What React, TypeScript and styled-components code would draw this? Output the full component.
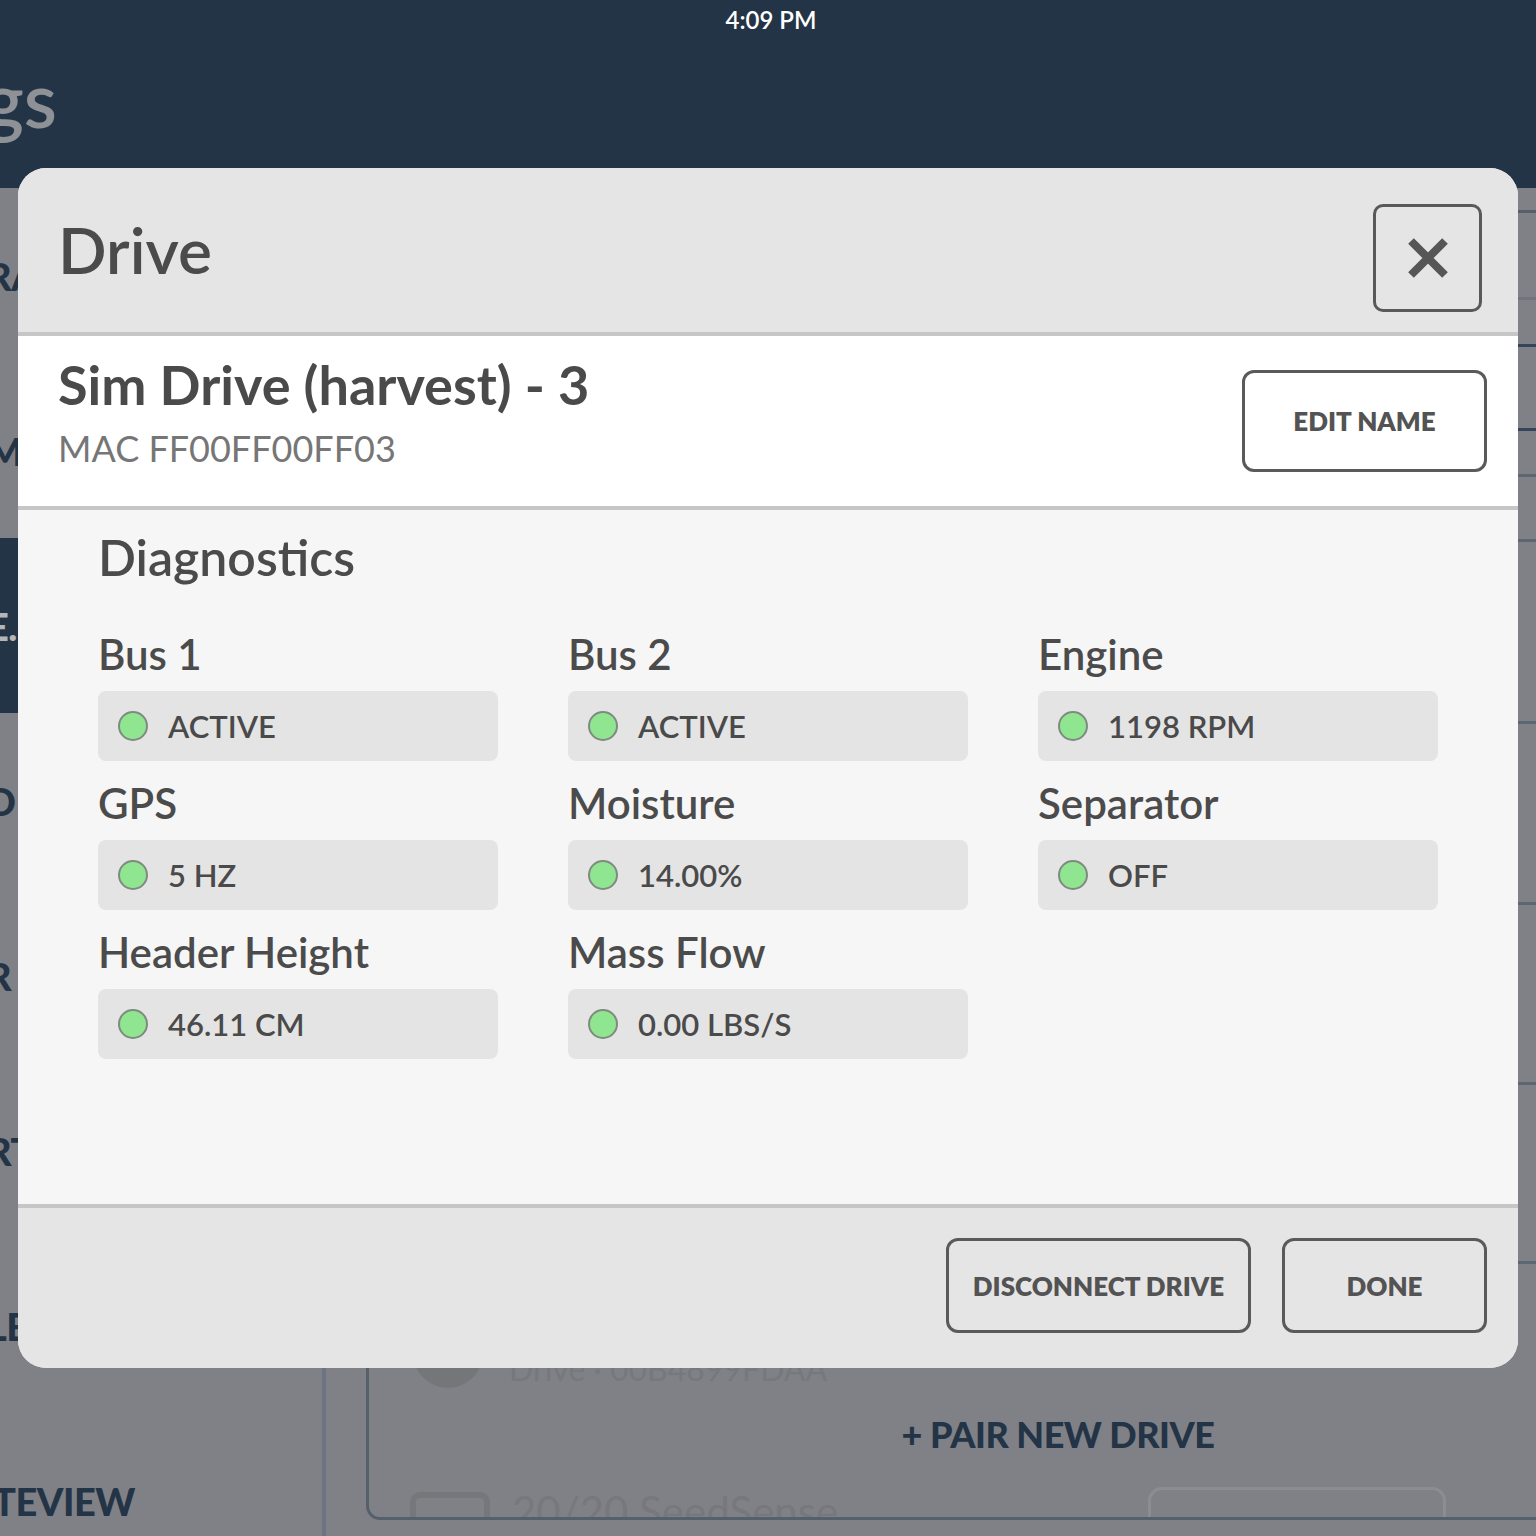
import React from 'react'
import styled, { createGlobalStyle } from 'styled-components'

const GlobalStyle = createGlobalStyle`
  html, body {
    margin: 0;
    padding: 0;
    background: #808186;
  }
  body {
    font-family: Lato, "Noto Sans", sans-serif;
  }
  * {
    box-sizing: border-box;
  }
`

type Diagnostic = { label: string; value: string }

const diagnostics: Diagnostic[] = [
  { label: 'Bus 1', value: 'ACTIVE' },
  { label: 'Bus 2', value: 'ACTIVE' },
  { label: 'Engine', value: '1198 RPM' },
  { label: 'GPS', value: '5 HZ' },
  { label: 'Moisture', value: '14.00%' },
  { label: 'Separator', value: 'OFF' },
  { label: 'Header Height', value: '46.11 CM' },
  { label: 'Mass Flow', value: '0.00 LBS/S' }
]

// only the slivers of the sidebar that peek out from behind the modal
const navItems = ['RA', 'M', 'E.', 'D', 'R', 'RT', 'LE', 'TEVIEW']
const activeNav = 2

// background list rows (height incl. bottom line, line colour)
const listRows: { h: number; line: string }[] = [
  { h: 87, line: '#6e757e' },
  { h: 47, line: '#34445a' },
  { h: 84, line: '#34445a' },
  { h: 46, line: '#5d6673' },
  { h: 65, line: '#5d6673' },
  { h: 182, line: '#5d6673' },
  { h: 181, line: '#5d6673' },
  { h: 180, line: '#5d6673' },
  { h: 179, line: '#5d6673' }
]

export default function App() {
  return (
    <>
      <GlobalStyle />
      <Screen>
        <AppHeader>
          <StatusBar>4:09 PM</StatusBar>
          <TitleClip>
            <PageTitle>Settings</PageTitle>
          </TitleClip>
        </AppHeader>

        <Body>
          <Sidebar>
            {navItems.map((item, i) => (
              <NavItem key={item} $active={i === activeNav}>
                <NavLabel $wide={item.length > 3}>{item}</NavLabel>
              </NavItem>
            ))}
          </Sidebar>

          <Main>
            <ListCard>
              {listRows.map((row, i) => (
                <ListRow key={i} $h={row.h} $line={row.line} />
              ))}
              <DriveRow>
                <DriveAvatar />
                <DriveText>
                  <span>Sim Drive (harvest) - 2</span>
                  <span>Drive · 00B4899FDAA</span>
                </DriveText>
              </DriveRow>
              <PairRow>+ PAIR NEW DRIVE</PairRow>
              <DeviceRow>
                <DeviceIcon />
                <DeviceName>20/20 SeedSense</DeviceName>
                <GhostButton />
              </DeviceRow>
            </ListCard>
          </Main>
        </Body>

        <Modal>
          <ModalHeader>
            <ModalTitle>Drive</ModalTitle>
            <CloseButton aria-label="Close">
              <svg width="40" height="40" viewBox="0 0 40 40">
                <path d="M3 3 L37 37 M37 3 L3 37" stroke="#565656" strokeWidth="8" />
              </svg>
            </CloseButton>
          </ModalHeader>

          <InfoSection>
            <InfoText>
              <DriveName>Sim Drive (harvest) - 3</DriveName>
              <MacAddress>MAC FF00FF00FF03</MacAddress>
            </InfoText>
            <OutlineButton $w={245} $h={102}>EDIT NAME</OutlineButton>
          </InfoSection>

          <DiagnosticsSection>
            <SectionTitle>Diagnostics</SectionTitle>
            <DiagGrid>
              {diagnostics.map(d => (
                <DiagCell key={d.label}>
                  <DiagLabel>{d.label}</DiagLabel>
                  <StatusBox>
                    <StatusDot />
                    <StatusValue>{d.value}</StatusValue>
                  </StatusBox>
                </DiagCell>
              ))}
            </DiagGrid>
          </DiagnosticsSection>

          <ModalFooter>
            <OutlineButton $w={305} $h={95}>DISCONNECT DRIVE</OutlineButton>
            <OutlineButton $w={205} $h={95}>DONE</OutlineButton>
          </ModalFooter>
        </Modal>
      </Screen>
    </>
  )
}

const Screen = styled.div`
  position: relative;
  width: 1536px;
  height: 1536px;
  overflow: hidden;
  display: flex;
  flex-direction: column;
  background: #808186;
`

const AppHeader = styled.header`
  height: 188px;
  flex-shrink: 0;
  background: #243447;
  display: flex;
  flex-direction: column;
`

const StatusBar = styled.div`
  height: 40px;
  line-height: 40px;
  text-align: center;
  color: #ffffff;
  font-size: 24px;
  font-weight: 600;
  padding-left: 6px;
`

const TitleClip = styled.div`
  width: 57px;
  margin-top: 13px;
  overflow: hidden;
  display: flex;
  justify-content: flex-end;
`

const PageTitle = styled.h1`
  margin: 0;
  font-size: 76px;
  font-weight: 600;
  line-height: 1.2;
  color: #8e9196;
  white-space: nowrap;
`

const Body = styled.div`
  flex: 1;
  display: flex;
  min-height: 0;
`

const Sidebar = styled.nav`
  width: 326px;
  flex-shrink: 0;
  border-right: 4px solid #6b7480;
  display: flex;
  flex-direction: column;
`

const NavItem = styled.div<{ $active: boolean }>`
  height: 175px;
  flex-shrink: 0;
  display: flex;
  align-items: center;
  overflow: hidden;
  background: ${p => (p.$active ? '#243447' : 'transparent')};
  color: ${p => (p.$active ? '#b3b5b9' : '#243447')};
  font-size: 38px;
  font-weight: 900;
  letter-spacing: -0.5px;
`

const NavLabel = styled.span<{ $wide: boolean }>`
  margin-left: ${p => (p.$wide ? -7 : -13)}px;
  white-space: nowrap;
`

const Main = styled.main`
  flex: 1;
  overflow: hidden;
  padding: 22px 0 0 40px;
`

const ListCard = styled.div`
  width: 1384px;
  height: 1310px;
  border: 3px solid #56606c;
  border-radius: 14px;
  overflow: hidden;
  display: flex;
  flex-direction: column;
`

const ListRow = styled.div<{ $h: number; $line: string }>`
  height: ${p => p.$h}px;
  flex-shrink: 0;
  border-bottom: 3px solid ${p => p.$line};
`

const DriveRow = styled.div`
  height: 124px;
  flex-shrink: 0;
  display: flex;
  align-items: flex-end;
  gap: 26px;
  padding-left: 44px;
`

const DriveAvatar = styled.div`
  width: 70px;
  height: 70px;
  border-radius: 50%;
  background: #75767a;
`

const DriveText = styled.div`
  display: flex;
  flex-direction: column;
  color: #77787c;
  font-size: 32px;
  line-height: 1.15;

  span:first-child {
    font-size: 40px;
    font-weight: 700;
  }
`

const PairRow = styled.div`
  height: 92px;
  flex-shrink: 0;
  display: flex;
  align-items: center;
  justify-content: center;
  color: #243447;
  font-size: 36px;
  font-weight: 900;
  letter-spacing: -0.5px;
`

const DeviceRow = styled.div`
  height: 100px;
  flex-shrink: 0;
  display: flex;
  align-items: flex-start;
  padding: 10px 0 0 41px;
  gap: 22px;
`

const DeviceIcon = styled.div`
  width: 80px;
  height: 70px;
  border: 6px solid #76777b;
  border-radius: 10px;
  margin-top: 2px;
`

const DeviceName = styled.div`
  color: #77787c;
  font-size: 42px;
  line-height: 1.2;
  margin-top: -4px;
`

const GhostButton = styled.div`
  width: 298px;
  height: 90px;
  margin-left: auto;
  margin-right: 301px;
  margin-top: -3px;
  border: 3px solid #8c8d91;
  border-radius: 14px;
`

const Modal = styled.section`
  position: absolute;
  left: 18px;
  top: 168px;
  width: 1500px;
  height: 1200px;
  border-radius: 28px;
  overflow: hidden;
  display: flex;
  flex-direction: column;
  background: #f6f6f6;
  color: #4b4b4b;
`

const ModalHeader = styled.div`
  height: 168px;
  flex-shrink: 0;
  background: #e5e5e5;
  border-bottom: 4px solid #c6c6c6;
  display: flex;
  align-items: center;
  justify-content: space-between;
  padding: 0 36px 0 40px;
`

const ModalTitle = styled.h2`
  margin: 0;
  font-size: 64px;
  font-weight: 600;
  line-height: 1.2;
`

const CloseButton = styled.button`
  width: 109px;
  height: 108px;
  margin-top: 16px;
  border: 3px solid #595959;
  border-radius: 10px;
  background: transparent;
  display: flex;
  align-items: center;
  justify-content: center;
  padding: 0;
`

const InfoSection = styled.div`
  height: 174px;
  flex-shrink: 0;
  background: #ffffff;
  border-bottom: 4px solid #c6c6c6;
  display: flex;
  justify-content: space-between;
  align-items: center;
  padding: 0 31px 0 40px;
`

const InfoText = styled.div`
  align-self: flex-start;
  padding-top: 17px;
  display: flex;
  flex-direction: column;
`

const DriveName = styled.div`
  font-size: 54px;
  font-weight: 700;
  line-height: 1.2;
  color: #4a4a4a;
`

const MacAddress = styled.div`
  margin-top: 9px;
  font-size: 36px;
  font-weight: 400;
  line-height: 1.2;
  color: #767676;
`

const OutlineButton = styled.button<{ $w: number; $h: number }>`
  width: ${p => p.$w}px;
  height: ${p => p.$h}px;
  flex-shrink: 0;
  border: 3px solid #5a5a5a;
  border-radius: 12px;
  background: transparent;
  font-family: inherit;
  font-size: 26px;
  font-weight: 800;
  color: #535353;
  padding: 0;
`

const DiagnosticsSection = styled.div`
  flex: 1;
  padding: 17px 80px 0 80px;
`

const SectionTitle = styled.h3`
  margin: 0;
  font-size: 50px;
  font-weight: 600;
  line-height: 1.2;
`

const DiagGrid = styled.div`
  margin-top: 42px;
  display: grid;
  grid-template-columns: repeat(3, 400px);
  column-gap: 70px;
  row-gap: 17px;
`

const DiagCell = styled.div`
  display: flex;
  flex-direction: column;
  gap: 12px;
`

const DiagLabel = styled.div`
  font-size: 42px;
  font-weight: 600;
  line-height: 1.2;
  height: 50px;
`

const StatusBox = styled.div`
  height: 70px;
  border-radius: 8px;
  background: #e4e4e4;
  display: flex;
  align-items: center;
  gap: 20px;
  padding: 0 20px;
`

const StatusDot = styled.span`
  width: 30px;
  height: 30px;
  border-radius: 50%;
  background: #90e590;
  border: 2px solid #7f8a80;
  flex-shrink: 0;
`

const StatusValue = styled.span`
  font-size: 31px;
  font-weight: 600;
  color: #4a4a4a;
`

const ModalFooter = styled.div`
  height: 164px;
  flex-shrink: 0;
  background: #e5e5e5;
  border-top: 4px solid #c6c6c6;
  display: flex;
  align-items: center;
  justify-content: flex-end;
  gap: 31px;
  padding: 0 31px 5px 0;
`
